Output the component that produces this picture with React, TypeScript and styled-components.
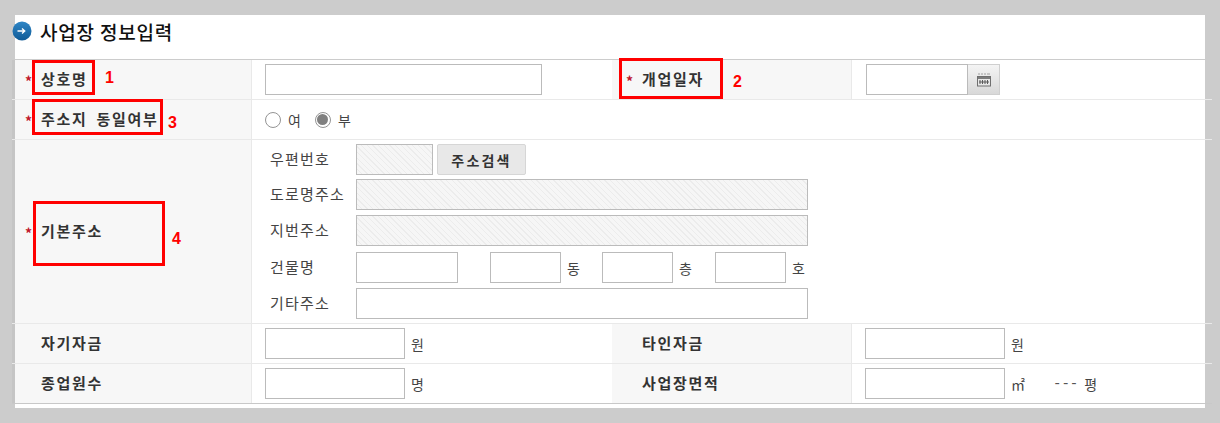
import React from 'react';
import styled, { createGlobalStyle } from 'styled-components';

const GlobalStyle = createGlobalStyle`
  html,
  body {
    margin: 0;
    padding: 0;
    background: #cccccc;
  }

  body {
    font-family: 'Noto Sans CJK KR', 'Noto Sans', sans-serif;
    color: #333333;
  }
`;

const Page = styled.div`
  position: relative;
  width: 1220px;
  height: 423px;
  padding: 15px 15px 15px;
  box-sizing: border-box;
  overflow: hidden;
`;

const Panel = styled.section`
  background: #ffffff;
  height: 393px;
`;

const TitleBar = styled.h2`
  display: flex;
  align-items: center;
  gap: 8px;
  height: 44px;
  margin: 0 0 0 -3px;
  padding-bottom: 12px;
  box-sizing: border-box;
  font-size: 19px;
  font-weight: 500;
  line-height: 1;
  color: #111111;
  letter-spacing: 0.8px;
`;

const FormTable = styled.div`
  width: 1200px;
  margin-left: -3px;
  border-top: 1px solid #cccccc;
  border-bottom: 1px solid #c8c8c8;
`;

const Row = styled.div<{ $height: number; $last?: boolean }>`
  display: flex;
  height: ${({ $height }) => $height}px;
  border-bottom: ${({ $last }) => ($last ? 'none' : '1px solid #e9e9e9')};
`;

const Head = styled.div<{ $outer?: boolean }>`
  display: flex;
  align-items: center;
  width: 240px;
  flex: none;
  box-sizing: border-box;
  padding: 0 0 2px ${({ $outer }) => ($outer ? 10 : 14)}px;
  background: #f7f7f7;
  border-left: ${({ $outer }) => ($outer ? '3px solid #c5c5c5' : 'none')};
  border-right: 1px solid #e9e9e9;
  font-size: 15px;
  font-weight: 700;
  color: #333333;
  letter-spacing: 1.7px;
  word-spacing: 4px;
`;

const Star = styled.span`
  width: 16px;
  margin-top: 5px;
  flex: none;
  color: #c0182c;
  font-size: 14px;
  font-weight: 700;
  letter-spacing: 0;
`;

const Blank = styled.span`
  width: 16px;
  flex: none;
`;

const Cell = styled.div<{ $width?: number; $inset?: number }>`
  display: flex;
  align-items: center;
  flex: ${({ $width }) => ($width ? 'none' : '1')};
  width: ${({ $width }) => ($width ? `${$width}px` : 'auto')};
  box-sizing: border-box;
  padding-left: ${({ $inset }) => $inset ?? 13}px;
  font-size: 14px;
  color: #444444;
`;

const Field = styled.input<{ $width: number; $locked?: boolean; $offset?: number }>`
  display: block;
  width: ${({ $width }) => $width}px;
  height: 31px;
  flex: none;
  box-sizing: border-box;
  margin: 0 0 0 ${({ $offset }) => $offset ?? 0}px;
  padding: 0 6px;
  border: 1px solid #bbbbbb;
  border-radius: 0;
  background: ${({ $locked }) =>
    $locked
      ? 'repeating-linear-gradient(45deg, #f6f6f6 0, #f6f6f6 3px, #ececec 3px, #ececec 4px)'
      : '#ffffff'};
`;

const CalendarButton = styled.button`
  display: flex;
  align-items: center;
  justify-content: center;
  width: 32px;
  height: 31px;
  padding: 0;
  border: 1px solid #cfcfcf;
  border-left: none;
  background: linear-gradient(#f4f4f4, #d8d8d8);
`;

const Unit = styled.span`
  width: 13px;
  margin-left: 6px;
  flex: none;
  font-size: 14px;
  line-height: 1;
  color: #444444;
`;

const Dashes = styled.span`
  margin-left: 29px;
  font-family: 'Liberation Mono', monospace;
  font-size: 14px;
  line-height: 1;
  color: #555555;
`;

const Radio = styled.span<{ $checked?: boolean }>`
  position: relative;
  display: block;
  width: 16px;
  height: 16px;
  box-sizing: border-box;
  border: 1.5px solid #949494;
  border-radius: 50%;
  background: #ffffff;

  &::after {
    content: '';
    display: ${({ $checked }) => ($checked ? 'block' : 'none')};
    position: absolute;
    inset: 1.5px;
    border-radius: 50%;
    background: #808080;
  }
`;

const RadioLabel = styled.span`
  margin: 0 14px 0 7px;
  font-size: 14px;
  color: #444444;
`;

const AddressStack = styled.div`
  display: flex;
  flex-direction: column;
  gap: 5px;
  padding-left: 5px;
  width: 100%;
`;

const AddressLine = styled.div<{ $nudge?: number }>`
  display: flex;
  align-items: center;
  height: 31px;
  margin-top: ${({ $nudge }) => $nudge ?? 0}px;
`;

const AddressLabel = styled.span`
  width: 86px;
  flex: none;
  padding-bottom: 2px;
  font-size: 15px;
  letter-spacing: 1.2px;
  color: #444444;
`;

const SearchButton = styled.button`
  width: 89px;
  height: 31px;
  margin-left: 4px;
  padding: 0;
  border: 1px solid #d6d6d6;
  border-radius: 2px;
  background: #e8e8e8;
  font-family: inherit;
  font-size: 14px;
  font-weight: 700;
  letter-spacing: 2.2px;
  color: #333333;
`;

const Mark = styled.div<{ $x: number; $y: number; $w: number; $h: number }>`
  position: absolute;
  left: ${({ $x }) => $x}px;
  top: ${({ $y }) => $y}px;
  width: ${({ $w }) => $w}px;
  height: ${({ $h }) => $h}px;
  box-sizing: border-box;
  border: 3px solid #ff0000;
`;

const MarkNumber = styled.span<{ $x: number; $y: number }>`
  position: absolute;
  left: ${({ $x }) => $x}px;
  top: ${({ $y }) => $y}px;
  font-family: 'Liberation Sans', sans-serif;
  font-size: 16px;
  font-weight: 700;
  line-height: 18px;
  color: #ff0000;
`;

const TitleIcon = () => (
  <svg width="20" height="20" viewBox="0 0 20 20" aria-hidden="true">
    <defs>
      <linearGradient id="titleBlue" x1="0" y1="0" x2="0" y2="1">
        <stop offset="0" stopColor="#2f86c6" />
        <stop offset="1" stopColor="#0f5a96" />
      </linearGradient>
    </defs>
    <circle cx="10" cy="10" r="9.5" fill="url(#titleBlue)" />
    <path d="M5.5 10h7M10 7.4l2.8 2.6-2.8 2.6" fill="none" stroke="#ffffff" strokeWidth="1.3" />
  </svg>
);

const CalendarIcon = () => (
  <svg width="14" height="14" viewBox="0 0 14 14" aria-hidden="true">
    <path d="M1 1h2M4 1h2M7 1h2M10 1h3" stroke="#a0a0a0" strokeWidth="1" />
    <rect x="0.5" y="3.5" width="13" height="9.5" fill="#e8e8e8" stroke="#6f6f6f" />
    <rect x="1" y="4" width="12" height="2" fill="#7c7c7c" />
    <path d="M3 7v4M5.5 7v4M8 7v4M10.5 7v4M2 9h10" stroke="#5c5c5c" strokeWidth="1" />
  </svg>
);

const App: React.FC = () => (
  <Page>
    <GlobalStyle />
    <Panel>
      <TitleBar>
        <TitleIcon />
        사업장 정보입력
      </TitleBar>
      <FormTable>
        <Row $height={39}>
          <Head $outer>
            <Star>*</Star>상호명
          </Head>
          <Cell $width={360}>
            <Field $width={277} />
          </Cell>
          <Head>
            <Star>*</Star>개업일자
          </Head>
          <Cell $inset={14}>
            <Field $width={102} />
            <CalendarButton type="button">
              <CalendarIcon />
            </CalendarButton>
          </Cell>
        </Row>
        <Row $height={39}>
          <Head $outer>
            <Star>*</Star>주소지 동일여부
          </Head>
          <Cell>
            <Radio />
            <RadioLabel>여</RadioLabel>
            <Radio $checked />
            <RadioLabel>부</RadioLabel>
          </Cell>
        </Row>
        <Row $height={183}>
          <Head $outer>
            <Star>*</Star>기본주소
          </Head>
          <Cell>
            <AddressStack>
              <AddressLine>
                <AddressLabel>우편번호</AddressLabel>
                <Field $width={77} $locked readOnly />
                <SearchButton type="button">주소검색</SearchButton>
              </AddressLine>
              <AddressLine $nudge={-1}>
                <AddressLabel>도로명주소</AddressLabel>
                <Field $width={452} $locked readOnly />
              </AddressLine>
              <AddressLine>
                <AddressLabel>지번주소</AddressLabel>
                <Field $width={452} $locked readOnly />
              </AddressLine>
              <AddressLine $nudge={1}>
                <AddressLabel>건물명</AddressLabel>
                <Field $width={102} />
                <Field $width={71} $offset={32} />
                <Unit>동</Unit>
                <Field $width={71} $offset={22} />
                <Unit>층</Unit>
                <Field $width={71} $offset={23} />
                <Unit>호</Unit>
              </AddressLine>
              <AddressLine>
                <AddressLabel>기타주소</AddressLabel>
                <Field $width={452} />
              </AddressLine>
            </AddressStack>
          </Cell>
        </Row>
        <Row $height={39}>
          <Head $outer>
            <Blank />자기자금
          </Head>
          <Cell $width={360}>
            <Field $width={140} />
            <Unit>원</Unit>
          </Cell>
          <Head>
            <Blank />타인자금
          </Head>
          <Cell>
            <Field $width={140} />
            <Unit>원</Unit>
          </Cell>
        </Row>
        <Row $height={39} $last>
          <Head $outer>
            <Blank />종업원수
          </Head>
          <Cell $width={360}>
            <Field $width={140} />
            <Unit>명</Unit>
          </Cell>
          <Head>
            <Blank />사업장면적
          </Head>
          <Cell>
            <Field $width={140} />
            <Unit>㎡</Unit>
            <Dashes>---</Dashes>
            <Unit>평</Unit>
          </Cell>
        </Row>
      </FormTable>
    </Panel>
    <Mark $x={32} $y={60} $w={63} $h={35} />
    <Mark $x={32} $y={99} $w={131} $h={36} />
    <Mark $x={619} $y={58} $w={104} $h={41} />
    <Mark $x={33} $y={201} $w={132} $h={65} />
    <MarkNumber $x={105} $y={69}>1</MarkNumber>
    <MarkNumber $x={733} $y={73}>2</MarkNumber>
    <MarkNumber $x={168} $y={114}>3</MarkNumber>
    <MarkNumber $x={172} $y={230}>4</MarkNumber>
  </Page>
);

export default App;
